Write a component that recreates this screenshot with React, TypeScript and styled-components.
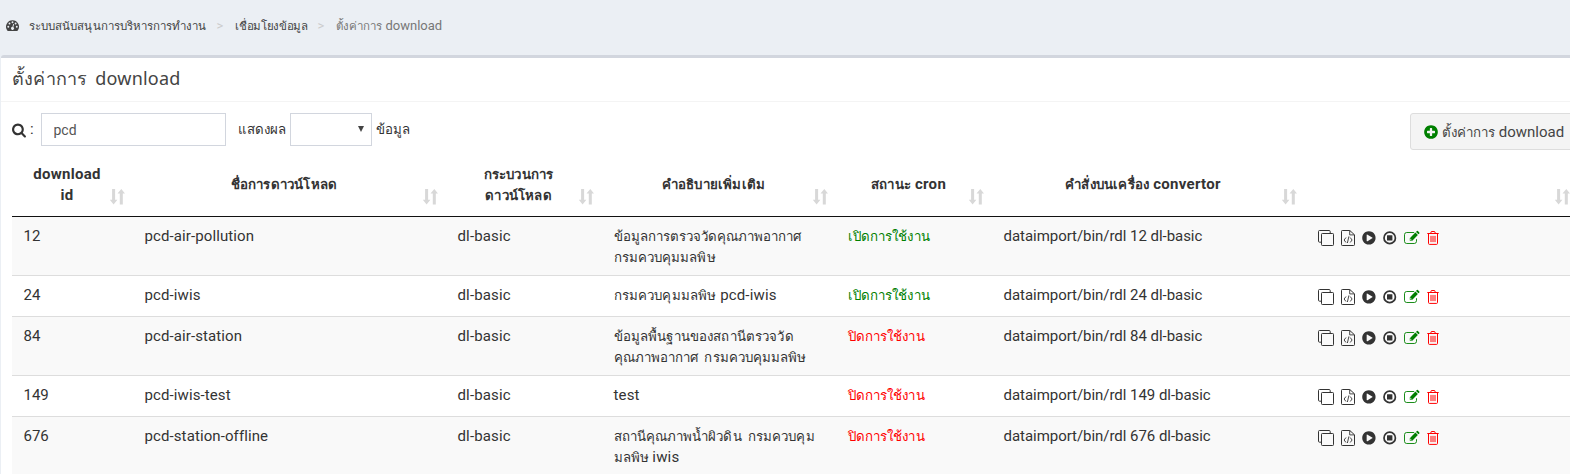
import React from 'react';
import styled, { createGlobalStyle } from 'styled-components';

const GlobalStyle = createGlobalStyle`
  *, *::before, *::after { box-sizing: border-box; }
  body {
    margin: 0;
    background: #ebeff4;
    color: #333;
    font-family: Roboto, sans-serif;
    font-size: 15px;
    line-height: 21px;
    overflow: hidden;
  }
`;

const Page = styled.div`
  height: 474px;
  display: flex;
  flex-direction: column;
  overflow: hidden;
`;

/* Thai glyphs run larger than Roboto at equal size, so they are scaled down. */
const Thai = styled.span<{ $track?: number }>`
  font-size: 0.885em;
  line-height: 1;
  letter-spacing: ${(p) => p.$track ?? 0}px;
  word-spacing: 3px;
`;

const Breadcrumb = styled.nav`
  flex: none;
  height: 55px;
  padding: 0 0 4px 6px;
  display: flex;
  align-items: center;
  font-size: 13px;
  color: #444;
  white-space: nowrap;
`;

const Crumb = styled.span<{ $muted?: boolean; $gap?: number }>`
  margin-left: ${(p) => p.$gap ?? 0}px;
  color: ${(p) => (p.$muted ? '#777' : '#444')};
`;

const Divider = styled.span`
  margin: 0 12px 0 10px;
  color: #ccc;
`;

const Panel = styled.section`
  flex: 1;
  margin-left: 1px;
  background: #fff;
  border-top: 3px solid #d2d6de;
  border-top-left-radius: 3px;
`;

const PanelHeader = styled.header`
  height: 44px;
  padding: 8px 0 0 11px;
  border-bottom: 1px solid #f4f4f4;
`;

const Title = styled.h3`
  margin: 0;
  font: 400 18px/24px 'Noto Sans', sans-serif;
  letter-spacing: 0.2px;
  word-spacing: 3px;
  color: #444;
  white-space: nowrap;
`;

const Toolbar = styled.div`
  display: flex;
  align-items: flex-start;
  height: 60px;
  padding: 11px 0 0 11px;
  white-space: nowrap;
`;

const Label = styled.label<{ $width: number }>`
  flex: none;
  width: ${(p) => p.$width}px;
  height: 33px;
  display: flex;
  align-items: center;
`;

const SearchInput = styled.input`
  width: 185px;
  height: 33px;
  margin-right: 12px;
  padding: 1px 12px 0 11.5px;
  border: 1px solid #d2d6de;
  border-radius: 0;
  color: #555;
  font: 14px Roboto, sans-serif;
`;

const PageSize = styled.div`
  width: 82px;
  height: 33px;
  margin-right: 4px;
  padding: 0 7px 2px 0;
  display: flex;
  align-items: center;
  justify-content: flex-end;
  border: 1px solid #d2d6de;
`;

const AddButton = styled.button`
  flex: none;
  width: 180px;
  height: 37px;
  margin: 0 -20px 0 auto;
  padding: 0 0 0 13px;
  display: flex;
  align-items: center;
  gap: 4px;
  background: #f4f4f4;
  border: 1px solid #ddd;
  border-radius: 3px;
  color: #444;
  font: 15px Roboto, sans-serif;
`;

const Table = styled.table`
  width: 1566px;
  margin-left: 11px;
  table-layout: fixed;
  border-collapse: separate;
  border-spacing: 0;
  white-space: nowrap;
`;

const HeadCell = styled.th<{ $width: number }>`
  position: relative;
  width: ${(p) => p.$width}px;
  height: 55px;
  padding: 0 22px 9px 11px;
  border-bottom: 1px solid #111;
  text-align: center;
  vertical-align: middle;
  font-weight: 700;
  letter-spacing: 0.3px;

  ${Thai} {
    letter-spacing: 0.2px;
  }
`;

const SortMark = styled.svg`
  position: absolute;
  right: 8px;
  bottom: 11px;
  width: 15px;
  height: 17px;
  fill: #d8d8d8;
`;

const Row = styled.tr<{ $height: number; $striped: boolean }>`
  height: ${(p) => p.$height}px;
  background: ${(p) => (p.$striped ? '#f9f9f9' : '#fff')};
`;

const Cell = styled.td<{ $tone?: string; $track?: number }>`
  padding: 9px 0 0 11.5px;
  vertical-align: top;
  border-bottom: 1px solid #ddd;
  color: ${(p) => p.$tone ?? '#333'};
  letter-spacing: ${(p) => p.$track ?? 0}px;
`;

const Actions = styled.div`
  display: flex;
  padding: 4px 0 0 1.5px;
`;

const Glyph = styled.svg<{ $gap?: number; $size?: number }>`
  flex: none;
  display: block;
  width: ${(p) => p.$size ?? 16}px;
  height: 16px;
  margin-right: ${(p) => p.$gap ?? 0}px;
`;

const DISC =
  'M896 128q209 0 385.5 103t279.5 279.5 103 385.5-103 385.5-279.5 279.5-385.5 103-385.5-103-279.5-279.5-103-385.5 103-385.5 279.5-279.5 385.5-103z';

const SortIcon = () => (
  <SortMark viewBox="0 0 15 17">
    <path d="M2.1 1h3v10.8h2.3L3.6 16.4-.2 11.8h2.3zM9.8 16.4h3V5.6h2.3L11.3 1 7.5 5.6h2.3z" />
  </SortMark>
);

const RowActions = () => (
  <Actions>
    <Glyph viewBox="0 0 16 16" $gap={7} fill="none" stroke="#333">
      <path d="M3.5 12.2h-2a1 1 0 0 1-1-1V1.5a1 1 0 0 1 1-1h9.7a1 1 0 0 1 1 1v2" />
      <rect x="3.5" y="3.5" width="12" height="12" rx="0.8" />
    </Glyph>
    <Glyph viewBox="0 0 14 16" $size={14} $gap={7} fill="none" stroke="#333">
      <path d="M1.3.5h7.5l4.7 4.3v9.9a.8.8 0 0 1-.8.8H1.3a.8.8 0 0 1-.8-.8V1.3a.8.8 0 0 1 .8-.8z" />
      <path d="M8.7.7v4.2h4.6M5 7.5 3.1 10 5 12.5M9.2 7.5l1.9 2.5-1.9 2.5M7.9 6.4 6.4 13" strokeWidth=".9" />
    </Glyph>
    <Glyph viewBox="0 0 14 16" $size={14} $gap={7} fill="#333">
      <path
        transform="translate(-.9 .1) scale(.0087)"
        d={DISC + 'm384 823q32-18 32-55t-32-55l-544-320q-31-19-64-1-32 19-32 56v640q0 37 32 56 16 8 32 8 17 0 32-9z'}
      />
    </Glyph>
    <Glyph viewBox="0 0 14 16" $size={14} $gap={7} fill="#333">
      <circle cx="6.7" cy="7.9" r="5.7" fill="none" stroke="#333" strokeWidth="1.7" />
      <rect x="4" y="5.2" width="5.4" height="5.4" rx=".4" />
    </Glyph>
    <Glyph viewBox="0 0 16 16" $gap={7} fill="green">
      <path
        d="M10.2 2.5H2.7A2.2 2.2 0 0 0 .5 4.7v6.6a2.2 2.2 0 0 0 2.2 2.2h7.6a2.2 2.2 0 0 0 2.2-2.2V9.2"
        fill="none"
        stroke="green"
        strokeWidth=".9"
      />
      <path d="M5.8 8.2 11.4 2.5l2.5 2.5-5.6 5.7H5.8zM12 1.9l.9-.9q.5-.4 1 0l1.4 1.4q.5.5 0 1l-.8.9z" />
      <path d="M6.5 8.7v1.2h1.1" fill="none" stroke="#fff" strokeWidth=".6" />
    </Glyph>
    <Glyph viewBox="0 0 13 16" $size={13} fill="none" stroke="red">
      <path d="M.3 3.5h11.4M3.6 3.3l.8-1.8h3.2l.8 1.8M1.5 3.5v9.9q0 1 .9 1h7.2q.9 0 .9-1V3.5" />
      <path d="M4 5.9v6.2M6 5.9v6.2M8 5.9v6.2" />
    </Glyph>
  </Actions>
);

type Column = { width: number; label: React.ReactNode };

const columns: Column[] = [
  { width: 121, label: <>download<br />id</> },
  { width: 313, label: <Thai>ชื่อการดาวน์โหลด</Thai> },
  { width: 156, label: <><Thai>กระบวนการ</Thai><br /><Thai>ดาวน์โหลด</Thai></> },
  { width: 234, label: <Thai>คำอธิบายเพิ่มเติม</Thai> },
  { width: 156, label: <><Thai>สถานะ</Thai> cron</> },
  { width: 313, label: <><Thai>คำสั่งบนเครื่อง</Thai> convertor</> },
  { width: 273, label: null },
];

type Item = { id: number; name: string; note: React.ReactNode; on: boolean; height: number };

const items: Item[] = [
  {
    id: 12, name: 'pcd-air-pollution', on: true, height: 59,
    note: <><Thai>ข้อมูลการตรวจวัดคุณภาพอากาศ</Thai><br /><Thai $track={0.1}>กรมควบคุมมลพิษ</Thai></>,
  },
  { id: 24, name: 'pcd-iwis', on: true, height: 41, note: <><Thai $track={0.15}>กรมควบคุมมลพิษ</Thai> pcd-iwis</> },
  {
    id: 84, name: 'pcd-air-station', on: false, height: 59,
    note: <><Thai $track={0.15}>ข้อมูลพื้นฐานของสถานีตรวจวัด</Thai><br /><Thai $track={0.06}>คุณภาพอากาศ กรมควบคุมมลพิษ</Thai></>,
  },
  { id: 149, name: 'pcd-iwis-test', on: false, height: 41, note: 'test' },
  {
    id: 676, name: 'pcd-station-offline', on: false, height: 59,
    note: <><Thai $track={0.08}>สถานีคุณภาพน้ำผิวดิน กรมควบคุม</Thai><br /><Thai>มลพิษ</Thai> iwis</>,
  },
];

export default function App() {
  return (
    <Page>
      <GlobalStyle />
      <Breadcrumb>
        <Glyph viewBox="0 0 14 16" $size={14} fill="#444">
          <path d="M6.5 2.2A6.5 6.5 0 0 0 1.1 12.3q.3.6.9.6h9q.6 0 .9-.6A6.5 6.5 0 0 0 6.5 2.2z" />
          <g fill="#ebeff4">
            <circle cx="2.3" cy="8.8" r=".95" />
            <circle cx="3.5" cy="5.5" r=".95" />
            <circle cx="6.5" cy="4.2" r=".95" />
            <circle cx="9.6" cy="5.5" r=".95" />
            <circle cx="10.8" cy="8.8" r=".95" />
            <path d="m7.2 5.9.9.3-.8 2.9a1.5 1.5 0 1 1-.9-.2z" />
          </g>
        </Glyph>
        <Crumb $gap={9}><Thai $track={0.06}>ระบบสนับสนุนการบริหารการทำงาน</Thai></Crumb>
        <Divider>&gt;</Divider>
        <Crumb><Thai $track={-0.35}>เชื่อมโยงข้อมูล</Thai></Crumb>
        <Divider>&gt;</Divider>
        <Crumb $muted><Thai>ตั้งค่าการ</Thai> download</Crumb>
      </Breadcrumb>
      <Panel>
        <PanelHeader>
          <Title>ตั้งค่าการ download</Title>
        </PanelHeader>
        <Toolbar>
          <Label $width={29}>
            <Glyph viewBox="60 0 1792 1792" $size={15} $gap={3} fill="#333">
              <path d="M1216 832q0-185-131.5-316.5t-316.5-131.5-316.5 131.5-131.5 316.5 131.5 316.5 316.5 131.5 316.5-131.5 131.5-316.5zm512 832q0 52-38 90t-90 38q-54 0-90-38l-343-342q-179 124-399 124-143 0-273.5-55.5t-225-150-150-225-55.5-273.5 55.5-273.5 150-225 225-150 273.5-55.5 273.5 55.5 225 150 150 225 55.5 273.5q0 220-124 399l343 343q37 37 37 90z" />
            </Glyph>
            :
          </Label>
          <SearchInput defaultValue="pcd" />
          <Label $width={52}><Thai>แสดงผล</Thai></Label>
          <PageSize>
            <svg width="6" height="6" viewBox="0 0 6 6" fill="#444"><path d="M0 0h6L3 6z" /></svg>
          </PageSize>
          <Label $width={40}><Thai $track={-0.1}>ข้อมูล</Thai></Label>
          <AddButton>
            <Glyph viewBox="128 0 1536 1792" $size={14} fill="green">
              <path d="M1344 960v-128q0-26-19-45t-45-19h-256v-256q0-26-19-45t-45-19h-128q-26 0-45 19t-19 45v256h-256q-26 0-45 19t-19 45v128q0 26 19 45t45 19h256v256q0 26 19 45t45 19h128q26 0 45-19t19-45v-256h256q26 0 45-19t19-45zm320-64q0 209-103 385.5t-279.5 279.5-385.5 103-385.5-103-279.5-279.5-103-385.5 103-385.5 279.5-279.5 385.5-103 385.5 103 279.5 279.5 103 385.5z" />
            </Glyph>
            <span><Thai>ตั้งค่าการ</Thai> download</span>
          </AddButton>
        </Toolbar>
        <Table>
          <thead>
            <tr>
              {columns.map((c, i) => (
                <HeadCell key={i} $width={c.width}>
                  {c.label}
                  <SortIcon />
                </HeadCell>
              ))}
            </tr>
          </thead>
          <tbody>
            {items.map((r, i) => (
              <Row key={r.id} $height={r.height} $striped={i % 2 === 0}>
                <Cell>{r.id}</Cell>
                <Cell $track={0.1}>{r.name}</Cell>
                <Cell $track={0.15}>dl-basic</Cell>
                <Cell $track={0.15}>{r.note}</Cell>
                <Cell $tone={r.on ? 'green' : 'red'}>
                  <Thai $track={0.12}>{r.on ? 'เปิดการใช้งาน' : 'ปิดการใช้งาน'}</Thai>
                </Cell>
                <Cell $track={-0.04}>{`dataimport/bin/rdl ${r.id} dl-basic`}</Cell>
                <Cell><RowActions /></Cell>
              </Row>
            ))}
          </tbody>
        </Table>
      </Panel>
    </Page>
  );
}
